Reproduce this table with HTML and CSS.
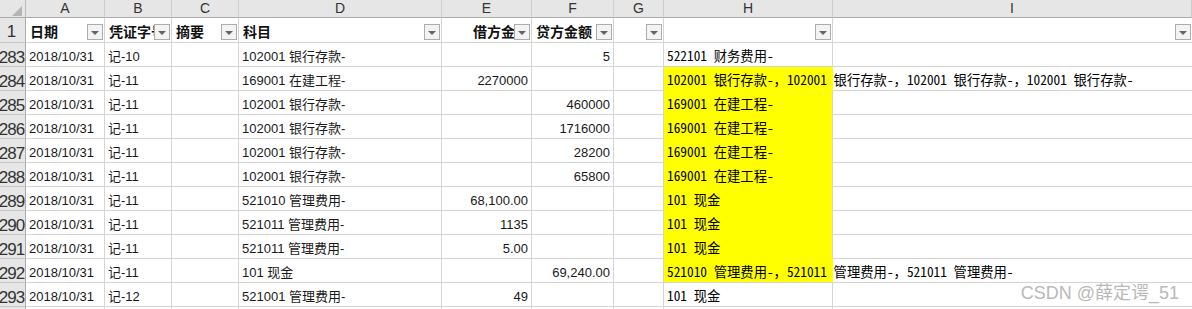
FILE: index.html
```html
<!DOCTYPE html>
<html lang="zh-CN">
<head>
<meta charset="utf-8">
<title>Sheet</title>
<link rel="stylesheet" href="styles.css">
</head>
<body>
<div class="page">
  <div class="sheet">
    <!-- column header row -->
    <div class="corner"><span class="tri"></span></div>
    <div class="ch">A</div><div class="ch">B</div><div class="ch">C</div><div class="ch">D</div><div class="ch">E</div><div class="ch">F</div><div class="ch">G</div><div class="ch">H</div><div class="ch last">I</div>

    <!-- row 1: titles -->
    <div class="rh rh1">1</div>
    <div class="c t"><span class="tx">日期</span><span class="fb"></span></div>
    <div class="c t"><span class="tx">凭证字号</span><span class="fb"></span></div>
    <div class="c t"><span class="tx">摘要</span><span class="fb"></span></div>
    <div class="c t"><span class="tx">科目</span><span class="fb"></span></div>
    <div class="c t r"><span class="tx">借方金额</span><span class="fb"></span></div>
    <div class="c t"><span class="tx">贷方金额</span><span class="fb"></span></div>
    <div class="c t"><span class="tx"></span><span class="fb"></span></div>
    <div class="c t"><span class="tx"></span><span class="fb"></span></div>
    <div class="c t last"><span class="tx"></span><span class="fb"></span></div>

    <!-- 283 -->
    <div class="rh">283</div>
    <div class="c">2018/10/31</div><div class="c">记-10</div><div class="c"></div><div class="c">102001 银行存款-</div><div class="c r"></div><div class="c r">5</div><div class="c"></div><div class="c h">522101 财务费用-</div><div class="c last"></div>
    <!-- 284 -->
    <div class="rh">284</div>
    <div class="c">2018/10/31</div><div class="c">记-11</div><div class="c"></div><div class="c">169001 在建工程-</div><div class="c r">2270000</div><div class="c r"></div><div class="c"></div><div class="c h y ov">102001 银行存款-，102001 银行存款-，102001 银行存款-，102001 银行存款-</div><div class="c last"></div>
    <!-- 285 -->
    <div class="rh">285</div>
    <div class="c">2018/10/31</div><div class="c">记-11</div><div class="c"></div><div class="c">102001 银行存款-</div><div class="c r"></div><div class="c r">460000</div><div class="c"></div><div class="c h y">169001 在建工程-</div><div class="c last"></div>
    <!-- 286 -->
    <div class="rh">286</div>
    <div class="c">2018/10/31</div><div class="c">记-11</div><div class="c"></div><div class="c">102001 银行存款-</div><div class="c r"></div><div class="c r">1716000</div><div class="c"></div><div class="c h y">169001 在建工程-</div><div class="c last"></div>
    <!-- 287 -->
    <div class="rh">287</div>
    <div class="c">2018/10/31</div><div class="c">记-11</div><div class="c"></div><div class="c">102001 银行存款-</div><div class="c r"></div><div class="c r">28200</div><div class="c"></div><div class="c h y">169001 在建工程-</div><div class="c last"></div>
    <!-- 288 -->
    <div class="rh">288</div>
    <div class="c">2018/10/31</div><div class="c">记-11</div><div class="c"></div><div class="c">102001 银行存款-</div><div class="c r"></div><div class="c r">65800</div><div class="c"></div><div class="c h y">169001 在建工程-</div><div class="c last"></div>
    <!-- 289 -->
    <div class="rh">289</div>
    <div class="c">2018/10/31</div><div class="c">记-11</div><div class="c"></div><div class="c">521010 管理费用-</div><div class="c r">68,100.00</div><div class="c r"></div><div class="c"></div><div class="c h y">101 现金</div><div class="c last"></div>
    <!-- 290 -->
    <div class="rh">290</div>
    <div class="c">2018/10/31</div><div class="c">记-11</div><div class="c"></div><div class="c">521011 管理费用-</div><div class="c r">1135</div><div class="c r"></div><div class="c"></div><div class="c h y">101 现金</div><div class="c last"></div>
    <!-- 291 -->
    <div class="rh">291</div>
    <div class="c">2018/10/31</div><div class="c">记-11</div><div class="c"></div><div class="c">521011 管理费用-</div><div class="c r">5.00</div><div class="c r"></div><div class="c"></div><div class="c h y">101 现金</div><div class="c last"></div>
    <!-- 292 -->
    <div class="rh">292</div>
    <div class="c">2018/10/31</div><div class="c">记-11</div><div class="c"></div><div class="c">101 现金</div><div class="c r"></div><div class="c r">69,240.00</div><div class="c"></div><div class="c h y yend ov">521010 管理费用-，521011 管理费用-，521011 管理费用-</div><div class="c last"></div>
    <!-- 293 -->
    <div class="rh">293</div>
    <div class="c">2018/10/31</div><div class="c">记-12</div><div class="c"></div><div class="c">521001 管理费用-</div><div class="c r">49</div><div class="c r"></div><div class="c"></div><div class="c h">101 现金</div><div class="c last"></div>
    <!-- next row (only its top edge is visible) -->
    <div class="rh"></div>
    <div class="c"></div><div class="c"></div><div class="c"></div><div class="c"></div><div class="c r"></div><div class="c r"></div><div class="c"></div><div class="c h"></div><div class="c last"></div>
  </div>
  <div class="mark">CSDN @薛定谔_51</div>
</div>
</body>
</html>
```

FILE: styles.css
```css
html, body {
  margin: 0;
  padding: 0;
  background: #ffffff;
}
body {
  width: 1192px;
  height: 309px;
  overflow: hidden;
}
.page {
  position: relative;
  width: 1192px;
  height: 309px;
  overflow: hidden;
  font-family: "Liberation Sans", "Noto Sans CJK SC", sans-serif;
  color: #1a1a1a;
}
.sheet {
  display: grid;
  grid-template-columns: 26px 79px 67px 67px 203px 90px 82px 50px 169px 359px;
  grid-template-rows: 18px 25px repeat(12, 24px);
}

/* column header row */
.corner {
  position: relative;
  background: #e6e6e6;
  border-right: 1px solid #bdbdbd;
  border-bottom: 1px solid #ababab;
  box-sizing: border-box;
}
.tri {
  position: absolute;
  right: 3px;
  bottom: 1px;
  width: 0;
  height: 0;
  border-left: 10px solid transparent;
  border-bottom: 10px solid #b4b4b4;
}
.ch {
  background: #e6e6e6;
  border-right: 1px solid #cdcdcd;
  border-bottom: 1px solid #ababab;
  box-sizing: border-box;
  font-size: 14px;
  line-height: 17px;
  text-align: center;
  color: #333;
}

/* row headers */
.rh {
  background: #e6e6e6;
  border-right: 1px solid #ababab;
  border-bottom: 1px solid #c6c6c6;
  box-sizing: border-box;
  display: flex;
  align-items: flex-end;
  justify-content: center;
  padding-right: 2px;
  font-size: 17px;
  letter-spacing: -1px;
  line-height: 17px;
  color: #333;
  white-space: nowrap;
  overflow: visible;
}
.rh1 {
  letter-spacing: 0;
  padding-bottom: 2px;
}

/* cells */
.c {
  position: relative;
  box-sizing: border-box;
  border-right: 1px solid #d4d4d4;
  border-bottom: 1px solid #d4d4d4;
  display: flex;
  align-items: flex-end;
  padding: 0 3px 1px 3px;
  font-size: 13px;
  line-height: 16px;
  white-space: nowrap;
  overflow: hidden;
  min-width: 0;
}
.c.last {
  border-right: none;
}
.c.r {
  justify-content: flex-end;
}

/* title row */
.c.t {
  font-size: 14px;
  font-weight: bold;
  line-height: 18px;
  color: #111;
  padding-left: 4px;
  padding-bottom: 1px;
}
.c.t .tx {
  white-space: nowrap;
  flex: none;
}
.c.t.r {
  padding-right: 2px;
}
.fb {
  position: absolute;
  right: 1px;
  bottom: 2px;
  width: 16px;
  height: 16px;
  box-sizing: border-box;
  border: 1px solid #acacac;
  background: #f3f3f3;
  display: flex;
  align-items: center;
  justify-content: center;
}
.fb::after {
  content: "";
  display: block;
  margin-top: 2px;
  width: 0;
  height: 0;
  border-left: 4px solid transparent;
  border-right: 4px solid transparent;
  border-top: 4px solid #646464;
}

/* H column text (SimSun-like) */
.c.h {
  font-family: "Noto Sans Mono CJK SC", "Noto Sans CJK SC", monospace;
  font-size: 13.33px;
  color: #000;
  padding-bottom: 2px;
}
.c.y {
  background: #ffff00;
  border-bottom-color: #ffff00;
}
.c.y.yend {
  border-bottom-color: #d4d4d4;
}
.c.ov {
  overflow: visible;
  border-right-color: transparent;
}

/* watermark */
.mark {
  position: absolute;
  right: 13px;
  bottom: 6px;
  font-family: "Liberation Sans", "Noto Sans CJK SC", sans-serif;
  font-size: 18px;
  line-height: 20px;
  color: #b9b9b9;
  white-space: nowrap;
}
```
